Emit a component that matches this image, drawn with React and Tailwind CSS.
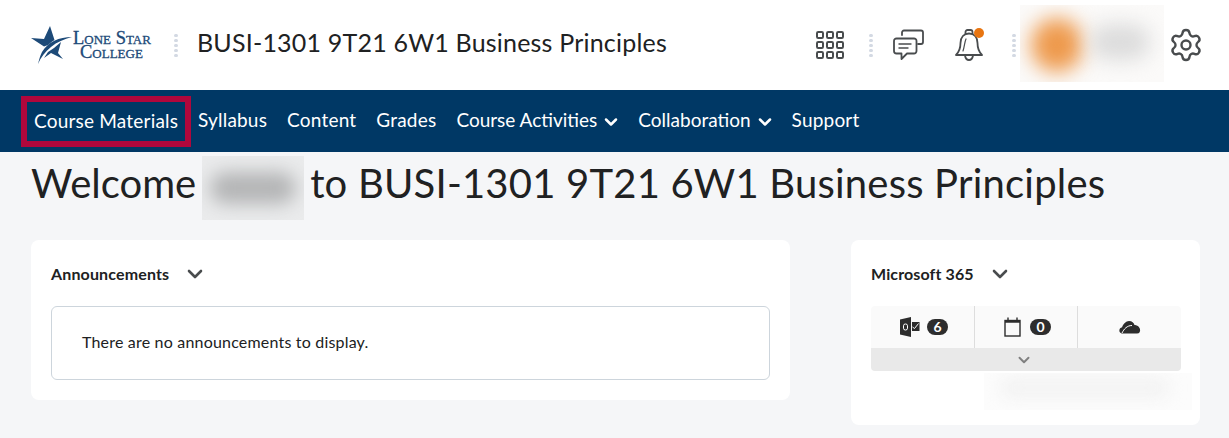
import React from 'react';
import { ChevronDown, Settings } from 'lucide-react';

const Dots = ({ className = '' }) => (
  <div className={`flex flex-col gap-[2px] ${className}`}>
    {[0, 1, 2, 3, 4].map((i) => (
      <span key={i} className="w-[4px] h-[3px] rounded-full bg-[#d3d9e3]" />
    ))}
  </div>
);

const Logo = () => (
  <div className="flex items-center w-[126px] h-[40px]">
    <svg width="42" height="40" viewBox="0 0 42 40" className="shrink-0">
      <path d="M19 1 L23.5 15 L20.5 17 L17 20 L13 21.5 L0 13 L13 14 Z" fill="#1d4a78" />
      <path d="M41 12 C28 12 17 17 11 27 C9 31 8 35 7 39 C10 32 14 27 20 22 C26 17 33 14 41 12 Z" fill="#1d4a78" />
      <path d="M30 17 L27 28 L32 34 L20 28 L13 33 L17 27 L23 23 Z" fill="#1d4a78" />
    </svg>
    <div className="font-['Liberation_Serif',serif] [font-variant:small-caps] [-webkit-text-stroke:0.3px_#1d4a78] text-[#1d4a78] leading-[14px] text-[18.5px] whitespace-nowrap">
      <div>Lone Star</div>
      <div className="pl-[7px]">College</div>
    </div>
  </div>
);

const Waffle = () => (
  <svg width="30" height="30" viewBox="0 0 30 30" fill="none" stroke="#494c4e" strokeWidth="2">
    {[2, 12, 22].map((y) =>
      [2, 12, 22].map((x) => <rect key={`${x}-${y}`} x={x} y={y} width="6" height="6" rx="1.2" />)
    )}
  </svg>
);

const Chat = () => (
  <svg width="32" height="32" viewBox="0 0 32 32" fill="none" stroke="#494c4e" strokeWidth="1.8" strokeLinecap="round" strokeLinejoin="round">
    <path d="M9 6 V3.5 A2 2 0 0 1 11 1.5 H28 A2 2 0 0 1 30 3.5 V13 A2 2 0 0 1 28 15 H25" />
    <path d="M3.5 9.5 H21 A2.5 2.5 0 0 1 23.5 12 V22 A2.5 2.5 0 0 1 21 24.5 H14 L8.5 30 V24.5 H3.5 A2.5 2.5 0 0 1 1 22 V12 A2.5 2.5 0 0 1 3.5 9.5" />
    <path d="M6 15 H18 M6 19 H15" strokeWidth="1.4" />
  </svg>
);

const Bell = () => (
  <div className="relative w-[30px] h-[32px]">
    <svg width="30" height="32" viewBox="0 0 30 32" fill="none" stroke="#494c4e" strokeWidth="1.8" strokeLinecap="round" strokeLinejoin="round">
      <path d="M11.5 5 V3 A2 2 0 0 1 13.5 1 H16.5 A2 2 0 0 1 18.5 3 V5" />
      <path d="M2 26 C5 23 6.5 19 6.5 14 C6.5 8 10 4.5 15 4.5 C20 4.5 23.5 8 23.5 14 C23.5 19 25 23 28 26 Z" />
      <path d="M11 26.5 C11.5 29.5 13 31 15 31 C17 31 18.5 29.5 19 26.5" />
      <path d="M12 10 C10.5 13 10.5 18 9 22" strokeWidth="1.2" />
    </svg>
    <span className="absolute -top-[1px] right-[0px] w-[10px] h-[10px] rounded-full bg-[#e87511]" />
  </div>
);

const NavItem = ({ children, caret }) => (
  <div className={`flex items-center text-white text-[19px] whitespace-nowrap ${caret ? 'gap-[4px] -mr-[3px]' : 'tracking-[0.2px]'}`}>
    {children}
    {caret && <ChevronDown size={20} strokeWidth={3} className="mt-[3px]" />}
  </div>
);

const Blur = ({ className = '', children }) => (
  <div className={`overflow-hidden ${className}`}>{children}</div>
);

const OutlookIcon = () => (
  <svg width="20" height="20" viewBox="0 0 20 20">
    <path d="M0 2.5 L11 0 V20 L0 17.5 Z" fill="#2d2d2d" />
    <rect x="3.5" y="7" width="4" height="6" rx="1.8" fill="none" stroke="#fff" strokeWidth="1" />
    <path d="M12 5 H19.5 V14 H12 Z" fill="#2d2d2d" />
    <path d="M12.5 10 L14.5 11.5 L18.5 6.5" fill="none" stroke="#fff" strokeWidth="1" />
  </svg>
);

const CalendarIcon = () => (
  <svg width="17" height="20" viewBox="0 0 17 20" fill="none" stroke="#2d2d2d">
    <rect x="1" y="3.5" width="15" height="15.5" strokeWidth="1.4" />
    <path d="M1 4.5 H16" strokeWidth="2.6" />
    <path d="M4 0.5 V4 M13 0.5 V4" strokeWidth="1.4" />
  </svg>
);

const CloudIcon = () => (
  <svg width="22" height="14" viewBox="0 0 22 14">
    <path d="M4 13.5 C1 13.5 0 11.5 0.5 9.5 C1 8 2 7.5 3 7.5 C4 4 7 1 10 1 C13 1 15 3 15.5 5 C18 4.5 20.5 7 21 9 C21.5 11.5 20.5 13.5 18 13.5 Z" fill="#2d2d2d" />
    <path d="M3 13 C5 9 8 5.5 13 5.5" fill="none" stroke="#fff" strokeWidth="1" />
  </svg>
);

const Count = ({ n }) => (
  <span className="w-[21px] h-[16px] rounded-full bg-[#2d2d2d] text-white text-[14px] font-bold flex items-center justify-center leading-none">
    {n}
  </span>
);

export default function App() {
  return (
    <div className="w-[1229px] h-[438px] overflow-hidden bg-[#f5f6f8] font-['Lato',sans-serif] text-[#202122]">
      {/* Header */}
      <header className="h-[90px] bg-white flex items-center pl-[31px]">
        <Logo />
        <Dots className="ml-[17px]" />
        <h1 className="ml-[19px] mb-[4px] text-[25px] tracking-[0.2px] font-normal whitespace-nowrap">BUSI-1301 9T21 6W1 Business Principles</h1>
        <div className="ml-auto flex items-center">
          <Waffle />
          <Dots className="ml-[24px]" />
          <div className="ml-[20px]"><Chat /></div>
          <div className="ml-[29px]"><Bell /></div>
          <Dots className="ml-[28px]" />
          <Blur className="ml-[4px] mb-[3px] w-[144px] h-[77px] bg-[#fbfaf9] relative">
            <div className="absolute left-[11px] top-[13px] w-[52px] h-[54px] rounded-full bg-[#ee9a4d] blur-[10px]" />
            <div className="absolute left-[70px] top-[19px] w-[60px] h-[36px] rounded-full bg-[#dcdcdc] blur-[10px]" />
          </Blur>
          <Settings size={36} strokeWidth={1.6} color="#494c4e" className="ml-[4px] mr-[25px]" />
        </div>
      </header>

      {/* Nav */}
      <nav className="h-[62px] bg-[#003865] flex items-center pl-[21px] pb-[2px] gap-[20px]">
        <div className="border-[6px] border-[#b0073c] w-[170px] h-[51px] pl-[7px] flex items-center -mr-[13px] mt-[2px]">
          <NavItem>Course Materials</NavItem>
        </div>
        <NavItem>Syllabus</NavItem>
        <NavItem>Content</NavItem>
        <NavItem>Grades</NavItem>
        <NavItem caret>Course Activities</NavItem>
        <NavItem caret>Collaboration</NavItem>
        <NavItem>Support</NavItem>
      </nav>

      {/* Welcome */}
      <div className="pl-[31px] h-[88px] flex items-start">
        <div className="text-[40px] leading-[62px] flex items-start whitespace-nowrap">
          <span>Welcome</span>
          <Blur className="ml-[6px] mt-[4px] w-[102px] h-[64px] bg-[#eaebec] relative">
            <div className="absolute left-[8px] top-[16px] w-[86px] h-[32px] rounded-full bg-[#b4b5b6] blur-[9px]" />
          </Blur>
          <span className="ml-[6px] tracking-[0.2px]">to BUSI-1301 9T21 6W1 Business Principles</span>
        </div>
      </div>

      {/* Widgets */}
      <div className="flex items-start justify-between pl-[31px] pr-[29px]">
        <section className="w-[759px] h-[160px] bg-white rounded-[8px] px-[20px] pt-[24px]">
          <div className="flex items-center text-[16px] tracking-[0.15px] font-bold h-[20px]">
            Announcements
            <ChevronDown size={24} strokeWidth={2.6} color="#494c4e" className="ml-[14px]" />
          </div>
          <div className="mt-[22px] h-[74px] border border-[#cdd5dc] rounded-[6px] flex items-center pl-[30px] pb-[2px] text-[16px] tracking-[0.19px]">
            There are no announcements to display.
          </div>
        </section>

        <section className="w-[349px] h-[185px] bg-white rounded-[8px] px-[20px] pt-[24px]">
          <div className="flex items-center text-[16px] tracking-[0.12px] font-bold h-[20px]">
            Microsoft 365
            <ChevronDown size={24} strokeWidth={2.6} color="#494c4e" className="ml-[14px]" />
          </div>
          <div className="mt-[22px] w-[310px] rounded-[4px] overflow-hidden">
            <div className="flex h-[42px] bg-[#fafafa]">
              <div className="w-[104px] flex items-center justify-center gap-[7px] pl-[3px] border-r border-[#dddddd]">
                <OutlookIcon />
                <Count n="6" />
              </div>
              <div className="w-[103px] flex items-center justify-center gap-[9px] pl-[3px] border-r border-[#dddddd]">
                <CalendarIcon />
                <Count n="0" />
              </div>
              <div className="flex-1 flex items-center justify-center">
                <CloudIcon />
              </div>
            </div>
            <div className="h-[23px] bg-[#e9e9e9] flex items-center justify-center pr-[4px]">
              <ChevronDown size={18} strokeWidth={2.6} color="#808080" />
            </div>
          </div>
          <Blur className="ml-[113px] mt-[2px] w-[208px] h-[37px] bg-[#fcfcfc] relative">
            <div className="absolute left-[16px] top-[4px] w-[170px] h-[22px] rounded-full bg-[#f3f3f3] blur-[8px]" />
          </Blur>
        </section>
      </div>
    </div>
  );
}
